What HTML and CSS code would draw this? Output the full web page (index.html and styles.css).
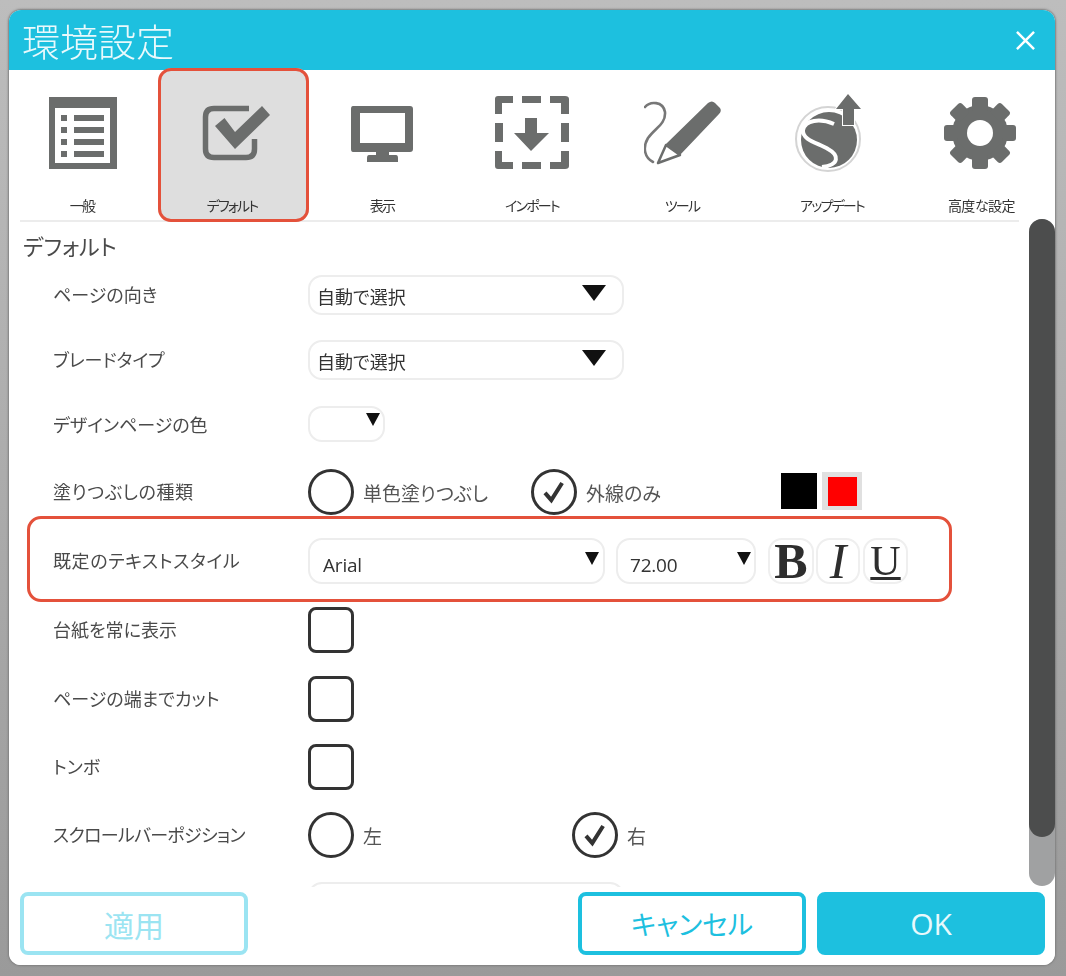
FILE: index.html
```html
<!DOCTYPE html>
<html lang="ja">
<head>
<meta charset="utf-8">
<title>環境設定</title>
<link rel="stylesheet" href="styles.css">
</head>
<body>
<div class="window">
  <header class="titlebar">
    <h1 class="title">環境設定</h1>
    <svg class="close" viewBox="0 0 20 20"><path d="M1 1L19 19M19 1L1 19"/></svg>
  </header>
  <nav class="tabs">
    <div class="tab">
      <svg class="tab-icon" viewBox="44 92 80 80"><path class="ic" fill-rule="evenodd" d="M49 97H117V169H49ZM55 108V163H110V108Z"/><path class="ic" d="M61 115h6v6h-6zM74 115h30v6H74zM61 127h6v6h-6zM74 127h30v6H74zM61 139h6v6h-6zM74 139h30v6H74zM61 151h6v6h-6zM74 151h30v6H74z"/></svg>
      <span class="tab-label">一般</span>
    </div>
    <div class="tab tab-active">
      <svg class="tab-icon" viewBox="194 92 80 80"><path class="ic-line" d="M249 108.500H214Q205.500 108.500 205.500 117V149Q205.500 157.500 214 157.500H246Q254.500 157.500 254.500 149V139"/><path class="ic" d="M215 126L224.500 118L235 132L262 106L270 115L235 149Z"/></svg>
      <span class="tab-label">デフォルト</span>
    </div>
    <div class="tab">
      <svg class="tab-icon" viewBox="344 92 80 80"><path class="ic" fill-rule="evenodd" d="M353 106H410Q413 106 413 109V149Q413 152 410 152H353Q351 152 351 149V109Q351 106 353 106ZM360 113V143H405V113Z"/><path class="ic" d="M376 152H389V155H396Q398 155 398 158V162H367V158Q367 155 369 155H376Z"/></svg>
      <span class="tab-label">表示</span>
    </div>
    <div class="tab">
      <svg class="tab-icon" viewBox="494 92 80 80"><path class="ic" d="M498 96H513V103H502V114H495V99Q495 96 498 96ZM522 96H541V103H522ZM550 96H565Q569 96 569 99V114H561V103H550ZM495 123H503V142H495ZM561 123H569V142H561ZM495 151H502V162H513V169H498Q495 169 495 166ZM522 162H541V169H522ZM561 151H569V166Q569 169 565 169H550V162H561ZM525 118H537V133H549L531 151L514 133H525Z"/></svg>
      <span class="tab-label">インポート</span>
    </div>
    <div class="tab">
      <svg class="tab-icon" viewBox="644 92 80 80"><path class="ic-thin" d="M645 107C650 101 663 101 665 112C666 124 655 128 648 138C642 148 645 158 653 162"/><path class="ic" d="M666 144L708 103Q712 100 715 103L720 108Q722 111 719 114L680 155Z"/><path class="ic-tip" d="M658 163L666 145L680 155Z"/></svg>
      <span class="tab-label">ツール</span>
    </div>
    <div class="tab">
      <svg class="tab-icon" viewBox="794 92 80 80"><circle class="ring" cx="828" cy="139" r="32"/><circle class="ic" cx="829" cy="140" r="28"/><path class="swoosh" d="M834 124C820 118 805 120 803 130C802 140 818 143 828 149C839 155 840 165 822 167"/><path class="arrow" d="M848 94L861 109H854V125H843V109H836Z"/></svg>
      <span class="tab-label">アップデート</span>
    </div>
    <div class="tab">
      <svg class="tab-icon" viewBox="942 92 80 80"><g class="ic"><circle cx="980" cy="133" r="28"/><rect x="972" y="97" width="16" height="14" rx="3"/><rect x="972" y="97" width="16" height="14" rx="3" transform="rotate(45 980 133)"/><rect x="972" y="97" width="16" height="14" rx="3" transform="rotate(90 980 133)"/><rect x="972" y="97" width="16" height="14" rx="3" transform="rotate(135 980 133)"/><rect x="972" y="97" width="16" height="14" rx="3" transform="rotate(180 980 133)"/><rect x="972" y="97" width="16" height="14" rx="3" transform="rotate(225 980 133)"/><rect x="972" y="97" width="16" height="14" rx="3" transform="rotate(270 980 133)"/><rect x="972" y="97" width="16" height="14" rx="3" transform="rotate(315 980 133)"/></g><circle class="hole" cx="980" cy="133" r="13"/></svg>
      <span class="tab-label tab-label-kanji">高度な設定</span>
    </div>
  </nav>
  <main class="pane">
    <h2 class="section">デフォルト</h2>
    <div class="rows">
      <div class="row">
        <span class="label">ページの向き</span>
        <div class="select select-wide"><span>自動で選択</span><i class="caret"></i></div>
      </div>
      <div class="row">
        <span class="label">ブレードタイプ</span>
        <div class="select select-wide"><span>自動で選択</span><i class="caret"></i></div>
      </div>
      <div class="row">
        <span class="label">デザインページの色</span>
        <div class="select select-color"><span></span><i class="caret caret-small"></i></div>
      </div>
      <div class="row">
        <span class="label label-wide">塗りつぶしの種類</span>
        <div class="radio"></div><span class="opt opt-fill">単色塗りつぶし</span>
        <div class="radio"><svg class="tick" viewBox="0 0 40 40"><path d="M10 21L17 29L29 10"/></svg></div><span class="opt opt-line">外線のみ</span>
        <div class="swatch swatch-black"></div>
        <div class="swatch-well"><div class="swatch-red"></div></div>
      </div>
      <div class="row row-marked">
        <span class="label label-high label-wide">既定のテキストスタイル</span>
        <div class="select select-font"><span class="latin">Arial</span><i class="caret caret-small"></i></div>
        <div class="select select-size"><span class="latin">72.00</span><i class="caret caret-small"></i></div>
        <div class="fmt fmt-b">B</div>
        <div class="fmt fmt-i">I</div>
        <div class="fmt fmt-u">U</div>
      </div>
      <div class="row">
        <span class="label">台紙を常に表示</span>
        <div class="check"></div>
      </div>
      <div class="row">
        <span class="label">ページの端までカット</span>
        <div class="check"></div>
      </div>
      <div class="row">
        <span class="label">トンボ</span>
        <div class="check"></div>
      </div>
      <div class="row">
        <span class="label label-tight">スクロールバーポジション</span>
        <div class="radio"></div><span class="opt opt-left">左</span>
        <div class="radio"><svg class="tick" viewBox="0 0 40 40"><path d="M10 21L17 29L29 10"/></svg></div><span class="opt">右</span>
      </div>
      <div class="row row-clipped">
        <div class="select select-wide select-next"></div>
      </div>
    </div>
  </main>
  <footer class="footer">
    <button class="btn btn-apply">適用</button>
    <button class="btn btn-cancel">キャンセル</button>
    <button class="btn btn-ok">OK</button>
  </footer>
  <div class="scroll"><div class="scroll-thumb"></div></div>
</div>
</body>
</html>
```

FILE: styles.css
```css
*, *::before, *::after { box-sizing: border-box; }
html, body { margin: 0; height: 976px; overflow: hidden; }
body {
  padding: 10px 0 0 9px;
  background: linear-gradient(#bdbdbd, #9a9a9a);
  font-family: "Noto Sans CJK JP", "Noto Sans", sans-serif;
  color: #444;
  font-feature-settings: "palt";
}
.window {
  position: relative;
  width: 1046px;
  height: 955px;
  display: flex;
  flex-direction: column;
  background: #fff;
  border-radius: 12px;
  box-shadow: 0 0 2px 1px #7f7f7f;
  filter: blur(0.6px);
}
.titlebar {
  height: 60px;
  flex: none;
  display: flex;
  align-items: center;
  justify-content: space-between;
  padding: 0 20px 0 13px;
  background: #1dc0df;
  border-radius: 12px 12px 0 0;
}
.title {
  margin: 0;
  font-size: 38px;
  font-weight: 300;
  line-height: 60px;
  color: #e9f9fc;
}
.close { width: 19px; height: 19px; }
.close path { stroke: #fff; stroke-width: 2.6; fill: none; }
.tabs {
  height: 152px;
  flex: none;
  display: grid;
  grid-template-columns: repeat(6, 150px) 146px;
  position: relative;
}
.tabs::after {
  content: "";
  position: absolute;
  left: 11px;
  width: 999px;
  bottom: 0;
  height: 2px;
  background: #ececec;
}
.tab {
  position: relative;
  display: flex;
  flex-direction: column;
  align-items: center;
  padding-top: 22px;
}
.tab-active {
  background: #dedede;
  margin-top: -2px;
  padding-top: 24px;
  border-radius: 13px;
  z-index: 1;
}
.tab-active::after {
  content: "";
  position: absolute;
  inset: 0 0 0 -1px;
  border: 3px solid #e4513b;
  border-radius: 13px;
}
.tab-icon { width: 80px; height: 80px; flex: none; display: block; }
.tab-label {
  margin-top: 23px;
  margin-right: 4px;
  font-size: 14px;
  line-height: 20px;
  letter-spacing: -1.8px;
  color: #333;
  white-space: nowrap;
}
.tab-label-kanji { letter-spacing: -0.5px; margin-right: 1px; }
.ic { fill: #6b6d6c; }
.ic-line { fill: none; stroke: #6b6d6c; stroke-width: 5.500; }
.ic-thin { fill: none; stroke: #777; stroke-width: 2.600; stroke-linecap: round; }
.ic-tip { fill: #fff; stroke: #6b6d6c; stroke-width: 2.500; stroke-linejoin: round; }
.ring { fill: none; stroke: #d4d4d4; stroke-width: 2; }
.swoosh { fill: none; stroke: #fff; stroke-width: 4; }
.arrow { fill: #6b6d6c; stroke: #fff; stroke-width: 2; paint-order: stroke; }
.hole { fill: #fff; }
.pane {
  flex: 1;
  min-height: 0;
  overflow: hidden;
  padding: 10px 0 0 14px;
}
.section {
  margin: 0 0 3px;
  font-size: 22px;
  font-weight: 400;
  line-height: 27px;
  color: #4a4a4a;
}
.rows {
  margin-left: -14px;
  padding-left: 44px;
  display: grid;
  grid-template-rows: 65px 65px 65px 70px 68px 69px 69px 68px 68px 34px;
}
.row {
  position: relative;
  display: flex;
  align-items: center;
}
.label {
  width: 255px;
  flex: none;
  margin-bottom: 2px;
  font-size: 18px;
  line-height: 24px;
  color: #4a4a4a;
  white-space: nowrap;
}
.label-high { margin-bottom: 2px; }
.label-wide { letter-spacing: 0.6px; }
.label-tight { letter-spacing: -0.7px; }
.select {
  height: 40px;
  flex: none;
  display: flex;
  align-items: center;
  justify-content: space-between;
  border: 2px solid #ededed;
  border-radius: 14px;
  background: #fff;
  font-size: 18px;
  color: #333;
}
.select-wide { width: 316px; padding: 2px 16px 0 7px; }
.select-color { width: 77px; height: 36px; padding-right: 3px; margin-top: -1px; }
.select-font { width: 297px; height: 46px; padding: 4px 4px 0 13px; }
.select-size { width: 140px; height: 46px; margin-left: 11px; padding: 4px 3px 0 12px; }
.latin { font-family: "Open Sans", sans-serif; font-size: 19px; margin-top: 4px; letter-spacing: -0.2px; }
.select-next { align-self: start; margin-top: 13px; margin-left: 255px; }
.caret {
  width: 0;
  height: 0;
  border-left: 12px solid transparent;
  border-right: 12px solid transparent;
  border-top: 16px solid #111;
  margin-top: -5px;
}
.caret-small {
  border-left-width: 7px;
  border-right-width: 7px;
  border-top-width: 13px;
  margin-top: -9px;
}
.radio {
  width: 46px;
  height: 46px;
  flex: none;
  display: flex;
  align-items: center;
  justify-content: center;
  border: 3px solid #333;
  border-radius: 50%;
}
.tick { width: 36px; height: 36px; }
.tick path { fill: none; stroke: #333; stroke-width: 4.500; }
.opt { margin-left: 9px; font-size: 19px; color: #555; white-space: nowrap; }
.opt-fill { width: 168px; }
.opt-line { width: 195px; }
.opt-left { width: 209px; }
.swatch { width: 36px; height: 36px; flex: none; margin-top: -2px; }
.swatch-black { background: #000; }
.swatch-well {
  width: 40px;
  height: 38px;
  margin-left: 5px;
  margin-top: -2px;
  flex: none;
  display: flex;
  align-items: center;
  justify-content: center;
  background: #e0e0e0;
}
.swatch-red { width: 29px; height: 29px; background: #f00; }
.row-marked::after {
  content: "";
  position: absolute;
  left: -26px;
  top: -11px;
  width: 925px;
  height: 86px;
  border: 3px solid #e4513b;
  border-radius: 14px;
  pointer-events: none;
}
.fmt {
  width: 46px;
  height: 46px;
  flex: none;
  display: flex;
  align-items: center;
  justify-content: center;
  border: 2px solid #efefef;
  border-radius: 14px;
  font-family: "Liberation Serif", serif;
  font-size: 50px;
  line-height: 1;
  color: #2e2e2e;
}
.fmt-b { margin-left: 12px; font-weight: 700; }
.fmt-i { margin-left: 2px; font-style: italic; width: 44px; }
.fmt-u {
  margin-left: 3px;
  width: 45px;
  font-size: 42px;
  text-decoration: underline;
  text-decoration-thickness: 3px;
  text-underline-offset: 2px;
}
.check {
  width: 46px;
  height: 46px;
  flex: none;
  border: 3px solid #333;
  border-radius: 8px;
}
.footer {
  flex: none;
  display: flex;
  gap: 11px;
  height: 78px;
  padding: 5px 10px 10px 11px;
  position: relative;
  background: #fff;
  border-radius: 0 0 12px 12px;
}
.btn {
  width: 228px;
  height: 63px;
  padding: 0;
  border: 4px solid #1dc0df;
  border-radius: 8px;
  background: #fff;
  font-family: inherit;
  font-feature-settings: "palt";
  font-size: 27px;
  color: #1dc0df;
}
.btn-apply { margin-right: auto; border-color: #9be4f2; color: #9be4f2; font-size: 30px; }
.btn-ok { background: #1dc0df; color: #e9f9fc; font-family: "Open Sans", sans-serif; font-size: 30px; }
.scroll {
  position: absolute;
  left: 1020px;
  top: 209px;
  width: 26px;
  height: 667px;
  background: #a0a1a2;
  border-radius: 13px;
}
.scroll-thumb {
  height: 618px;
  background: #4c4d4d;
  border-radius: 13px;
}
```
